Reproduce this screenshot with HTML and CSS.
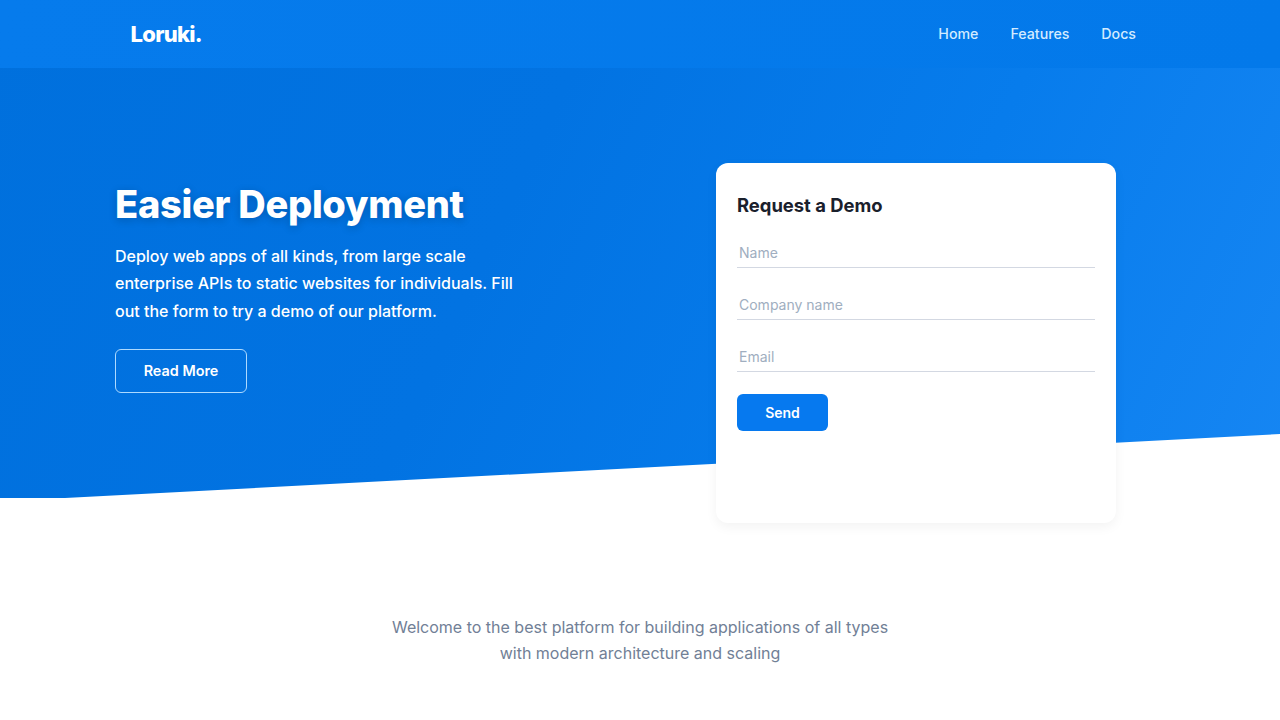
FILE: index.html
```html
<!DOCTYPE html>
<html lang="en">
<head>
<meta charset="utf-8">
<title>Loruki</title>
<link rel="stylesheet" href="styles.css">
</head>
<body>
<div class="top">
  <div class="hero-bg"></div>
  <header class="navbar">
    <a class="logo" href="#">Loruki.</a>
    <nav class="nav">
      <a href="#">Home</a>
      <a href="#">Features</a>
      <a href="#">Docs</a>
    </nav>
  </header>
  <section class="showcase">
    <div class="intro">
      <h1>Easier Deployment</h1>
      <p>Deploy web apps of all kinds, from large scale enterprise APIs to static websites for individuals. Fill out the form to try a demo of our platform.</p>
      <a class="btn-outline" href="#">Read More</a>
    </div>
    <form class="card">
      <h2>Request a Demo</h2>
      <input class="field" type="text" placeholder="Name">
      <input class="field" type="text" placeholder="Company name">
      <input class="field" type="email" placeholder="Email">
      <button class="btn-send" type="button">Send</button>
    </form>
  </section>
</div>
<section class="welcome">
  <p>Welcome to the best platform for building applications of all types<br>with modern architecture and scaling</p>
</section>
</body>
</html>
```
FILE: styles.css
```css
* { box-sizing: border-box; }
html, body { margin: 0; height: 100%; }
body {
  font-family: Inter, "Liberation Sans", sans-serif;
  background: #fff;
  color: #1a202c;
  overflow: hidden;
}
a { text-decoration: none; color: inherit; }

.top { position: relative; height: 523px; }
.hero-bg {
  position: absolute;
  top: 0; left: 0; right: 0;
  height: 498px;
  background: linear-gradient(115deg, #0070dd 0%, #0273e2 40%, #077cec 70%, #1686f3 100%);
  clip-path: polygon(0 0, 100% 0, 100% 434px, 65px 498px, 0 498px);
}
.navbar {
  position: relative;
  height: 68px;
  display: flex;
  align-items: center;
  justify-content: space-between;
  padding: 0 144px 0 130.5px;
  background: linear-gradient(100deg, #067bec, #0379ea);
}
.logo { font-size: 22px; font-weight: 800; color: #fff; letter-spacing: -0.7px; }
.nav {
  display: flex;
  gap: 32px;
  padding-bottom: 1px;
  font-size: 14.2px;
  font-weight: 500;
  color: #d3ebff;
}

.showcase {
  position: relative;
  display: flex;
  justify-content: space-between;
  align-items: flex-start;
  padding: 95px 164px 0 115px;
}
.intro { width: 410px; padding-top: 17px; color: #fff; }
.intro h1 {
  margin: 0;
  font-size: 38px;
  line-height: 48px;
  font-weight: 800;
  letter-spacing: -0.28px;
  text-shadow: 0 2px 8px rgba(0, 0, 0, 0.2);
}
.intro p {
  margin: 14.6px 0 0;
  font-size: 16px;
  line-height: 27.5px;
  font-weight: 500;
}
.btn-outline {
  display: flex;
  align-items: center;
  justify-content: center;
  width: 132px;
  height: 44px;
  margin-top: 24px;
  padding-bottom: 1px;
  border: 1px solid #aedaff;
  border-radius: 6px;
  font-size: 14.4px;
  font-weight: 600;
  color: #fff;
}

.card {
  width: 400px;
  height: 360px;
  padding: 30px 21px;
  background: #fff;
  border-radius: 12px;
  box-shadow: 0 4px 12px rgba(0, 0, 0, 0.05);
  display: flex;
  flex-direction: column;
  align-items: flex-start;
}
.card h2 {
  margin: 0 0 20px;
  font-size: 18.4px;
  line-height: 25px;
  font-weight: 700;
  color: #1a202c;
}
.field {
  width: 100%;
  height: 30px;
  margin-bottom: 22px;
  padding: 0 2px;
  border: 0;
  border-bottom: 1px solid #d3d8e2;
  background: none;
  outline: none;
  font: 400 14px Inter, "Liberation Sans", sans-serif;
}
.field::placeholder { color: #a0aec0; opacity: 1; }
.btn-send {
  width: 91px;
  height: 37px;
  border: 0;
  border-radius: 6px;
  background: #0679ef;
  color: #fff;
  font: 600 14px Inter, "Liberation Sans", sans-serif;
}

.welcome { padding-top: 91px; text-align: center; }
.welcome p {
  margin: 0;
  font-size: 16px;
  line-height: 26px;
  color: #718096;
}
```
